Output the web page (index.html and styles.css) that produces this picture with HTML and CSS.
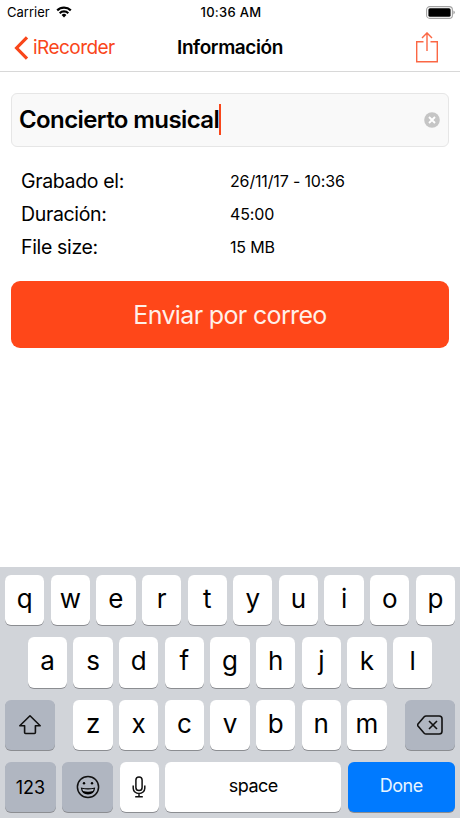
FILE: index.html
```html
<!doctype html>
<html lang="es">
<head>
    <meta charset="utf-8">
    <meta name="viewport" content="width=device-width, initial-scale=1">
    <title>Información</title>
    <link rel="stylesheet" href="styles.css">
</head>
<body>
    <div class="screen">
        <div class="status-bar">
            <div class="carrier">
                <span>Carrier</span>
                <svg width="16" height="12" viewBox="0 0 16 12" fill="none" stroke="#000" stroke-width="2.2">
                    <path d="M1.2 4.4a9.7 9.7 0 0 1 13.6 0"/>
                    <path d="M3.7 7.2a6.1 6.1 0 0 1 8.6 0"/>
                    <path d="M8 11.4L5.6 9a3.4 3.4 0 0 1 4.8 0z" fill="#000" stroke="none"/>
                </svg>
            </div>
            <span class="clock">10:36 AM</span>
            <svg class="battery" width="29" height="13" viewBox="0 0 29 13">
                <rect x=".6" y=".6" width="25.8" height="11.8" rx="3.2" fill="#fff" stroke="#a3a3a3" stroke-width="1.1"/>
                <rect x="2.4" y="2.2" width="22.2" height="8.6" rx="1.6"/>
                <path d="M27.4 4.6q1.5.6 1.5 1.9t-1.5 1.9z" fill="#a3a3a3"/>
            </svg>
        </div>
        <header class="nav-bar">
            <a class="back" href="#">
                <svg width="15" height="24" viewBox="0 0 15 24" fill="none" stroke="#f9461a" stroke-width="3.2">
                    <path d="M13 1.4L2.6 12 13 22.6"/>
                </svg>
                <span>iRecorder</span>
            </a>
            <h1>Información</h1>
            <a class="share" href="#">
                <svg width="24" height="32" viewBox="0 0 24 32" fill="none" stroke="#fb6744" stroke-width="1.4">
                    <path d="M8.5 9.7H1.7v20h20.6v-20h-6.8M12 19V.9M7 5.9l5-5 5 5"/>
                </svg>
            </a>
        </header>
        <main>
            <div class="name-field">
                <span class="name">Concierto musical</span>
                <span class="caret"></span>
                <svg class="clear" width="16" height="16" viewBox="0 0 16 16">
                    <circle cx="8" cy="8" r="7.8" fill="#c5c5c5"/>
                    <path d="M5 5l6 6M11 5l-6 6" stroke="#fff" stroke-width="1.9"/>
                </svg>
            </div>
            <dl class="details">
                <dt>Grabado el:</dt>
                <dd>26/11/17 - 10:36</dd>
                <dt>Duración:</dt>
                <dd>45:00</dd>
                <dt>File size:</dt>
                <dd>15 MB</dd>
            </dl>
            <button class="send" type="button">Enviar por correo</button>
        </main>
        <div class="keyboard">
            <div class="row">
                <div class="key">q</div>
                <div class="key">w</div>
                <div class="key">e</div>
                <div class="key">r</div>
                <div class="key">t</div>
                <div class="key">y</div>
                <div class="key">u</div>
                <div class="key">i</div>
                <div class="key">o</div>
                <div class="key">p</div>
            </div>
            <div class="row middle">
                <div class="key">a</div>
                <div class="key">s</div>
                <div class="key">d</div>
                <div class="key">f</div>
                <div class="key">g</div>
                <div class="key">h</div>
                <div class="key">j</div>
                <div class="key">k</div>
                <div class="key">l</div>
            </div>
            <div class="row spread">
                <div class="key special">
                    <svg width="24" height="22" viewBox="0 0 24 22" fill="none" stroke="#111" stroke-width="1.6" stroke-linejoin="round">
                        <path d="M12 1.8L1.8 11.7h4.8v6.8q0 1 1 1h8.8q1 0 1-1v-6.8h4.8z"/>
                    </svg>
                </div>
                <div class="letters">
                    <div class="key">z</div>
                    <div class="key">x</div>
                    <div class="key">c</div>
                    <div class="key">v</div>
                    <div class="key">b</div>
                    <div class="key">n</div>
                    <div class="key">m</div>
                </div>
                <div class="key special">
                    <svg width="26" height="20" viewBox="0 0 26 20" fill="none" stroke="#111" stroke-width="1.6" stroke-linejoin="round">
                        <path d="M9 1h13.2q2.8 0 2.8 2.8v12.4q0 2.8-2.8 2.8H9q-1 0-1.8-.8L1 11q-.8-1 0-2l6.2-7.2Q8 1 9 1z"/>
                        <path d="M12 6l8 8M20 6l-8 8"/>
                    </svg>
                </div>
            </div>
            <div class="row">
                <div class="key special numbers">123</div>
                <div class="key special emoji">
                    <svg width="24" height="24" viewBox="0 0 24 24">
                        <circle cx="12" cy="12" r="10.6" fill="none" stroke="#111" stroke-width="1.5"/>
                        <circle cx="8" cy="8.2" r="1.2"/>
                        <circle cx="16" cy="8.2" r="1.2"/>
                        <path d="M4.8 12.4q7.2 1.8 14.4 0-.8 7-7.2 7t-7.2-7z"/>
                        <path d="M6.2 13.8q5.8 1.4 11.6 0l-.8 2.3q-5 1.2-10 0z" fill="#b4bac4"/>
                    </svg>
                </div>
                <div class="key mic">
                    <svg width="14" height="22" viewBox="0 0 14 22" fill="none" stroke="#111" stroke-width="1.5">
                        <rect x="3.9" y="1" width="6.2" height="13.6" rx="3.1"/>
                        <path d="M1.2 9.5v2.8a5.8 5.2 0 0 0 11.6 0V9.5M7 17.5v3M3.2 20.7h7.6"/>
                    </svg>
                </div>
                <div class="key space">space</div>
                <div class="key done">Done</div>
            </div>
        </div>
    </div>
</body>
</html>
```
FILE: styles.css
```css
* {
    box-sizing: border-box;
}
body {
    margin: 0;
    font-family: Inter, "Liberation Sans", sans-serif;
    color: #000;
    background-color: #fff;
}
svg {
    display: block;
}
a {
    color: #f9461a;
    text-decoration: none;
}
.screen {
    display: flex;
    flex-direction: column;
    width: 460px;
    height: 818px;
    overflow: hidden;
}
.status-bar {
    display: grid;
    grid-template-columns: 1fr auto 1fr;
    align-items: center;
    height: 24px;
    padding: 0 5px 0 7px;
    font-size: 13px;
}
.carrier {
    display: flex;
    align-items: center;
    gap: 6px;
}
.clock {
    font-weight: 500;
    letter-spacing: 0.3px;
}
.battery {
    justify-self: end;
}
.nav-bar {
    display: grid;
    grid-template-columns: 1fr auto 1fr;
    align-items: center;
    height: 48px;
    padding: 0 21px 0 14px;
    border-bottom: 1px solid #d8d8d8;
}
.back {
    display: flex;
    align-items: center;
    gap: 4px;
    font-size: 19px;
    letter-spacing: -0.55px;
}
.nav-bar h1 {
    margin: 0 0 0 7px;
    font-size: 19px;
    font-weight: 600;
    letter-spacing: -0.4px;
}
.share {
    justify-self: end;
}
main {
    flex: 1;
    padding: 21px 11px 0;
}
.name-field {
    display: flex;
    align-items: center;
    height: 54px;
    padding: 0 8px 0 7px;
    border: 1px solid #e6e6e6;
    border-radius: 6px;
    background-color: #f9f9f9;
}
.name {
    margin-bottom: 1px;
    font-size: 24px;
    font-weight: 600;
    letter-spacing: -0.6px;
    white-space: nowrap;
}
.caret {
    width: 2px;
    height: 31px;
    margin-bottom: 2px;
    background-color: #f9461a;
}
.clear {
    margin-left: auto;
}
.details {
    display: grid;
    grid-template-columns: 209px 1fr;
    grid-auto-rows: 33px;
    align-items: center;
    margin: 17px 0 18px;
    padding-left: 10px;
}
.details dt {
    font-size: 19.5px;
    letter-spacing: -0.35px;
}
.details dd {
    margin: 0;
    font-size: 16px;
    letter-spacing: -0.15px;
}
.send {
    display: block;
    width: 100%;
    height: 67px;
    padding: 0;
    border: none;
    border-radius: 9px;
    background-color: #ff4719;
    color: #fff0e8;
    font-family: inherit;
    font-size: 25px;
    font-weight: 400;
    letter-spacing: -0.65px;
}
.keyboard {
    display: flex;
    flex-direction: column;
    gap: 12px;
    height: 251px;
    padding: 8px 5px 0;
    background-color: #d1d4d9;
}
.row, .letters {
    display: flex;
    gap: 6.4px;
}
.middle {
    justify-content: center;
}
.spread {
    justify-content: space-between;
}
.key {
    display: flex;
    align-items: center;
    justify-content: center;
    width: 39.25px;
    height: 50.3px;
    padding-bottom: 3px;
    border-radius: 6px;
    background-color: #fff;
    box-shadow: 0 1px 0 #8b8d91;
    font-size: 26px;
    font-weight: 400;
}
.special {
    width: 50px;
    padding-bottom: 0;
    background-color: #b0b6c1;
}
.numbers, .space, .done {
    font-size: 18px;
    letter-spacing: -0.5px;
}
.numbers {
    letter-spacing: 0;
}
.numbers, .emoji {
    width: 51px;
}
.mic {
    padding-bottom: 0;
}
.space {
    flex: 1;
}
.done {
    width: 107.5px;
    background-color: #007aff;
    color: #e8f5ff;
}
```
